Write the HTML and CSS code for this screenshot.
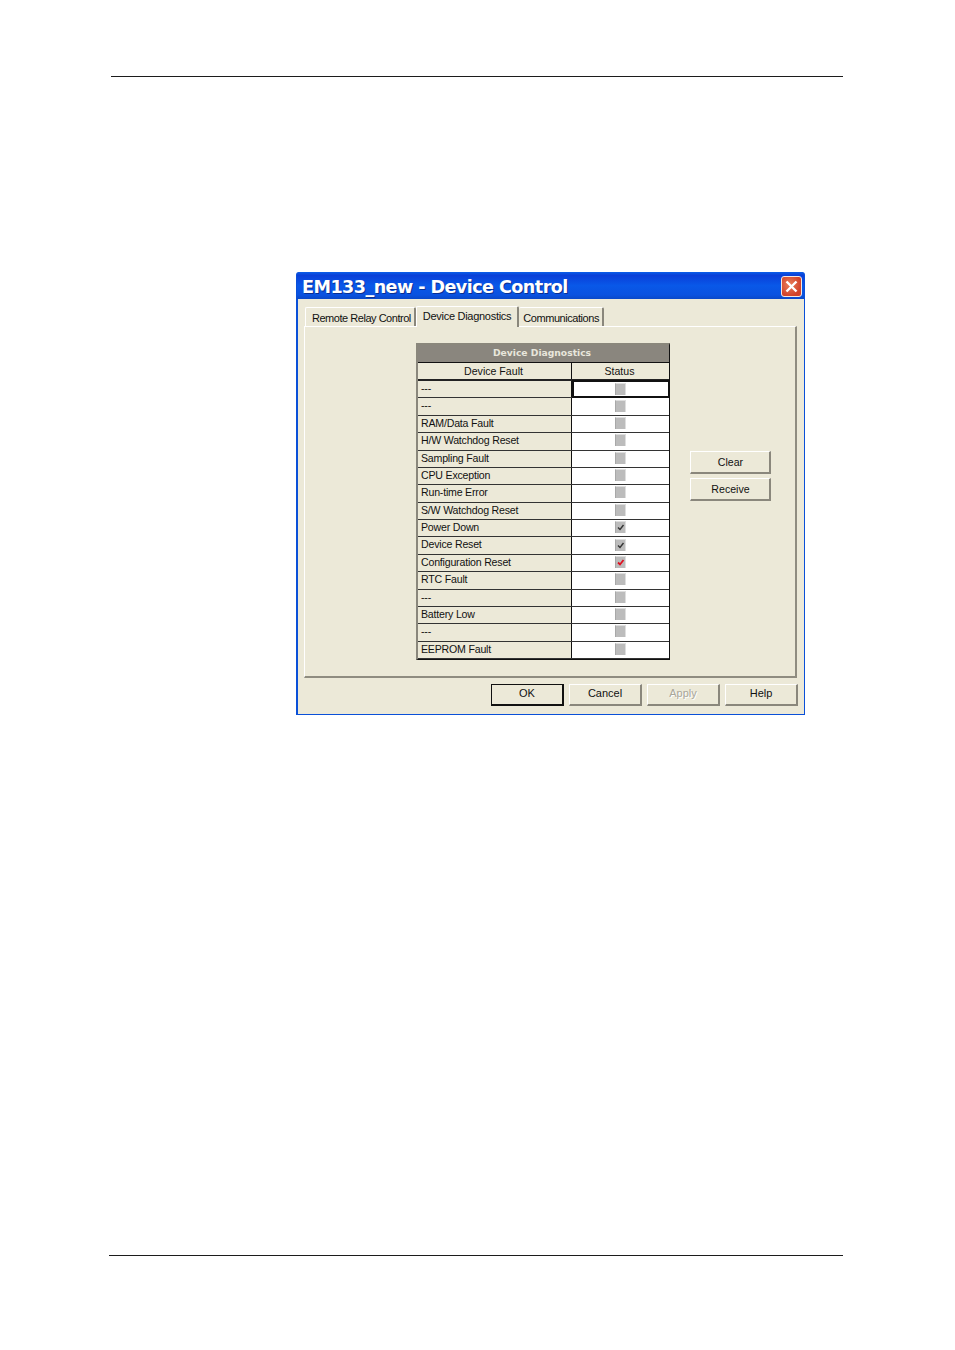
FILE: index.html
```html
<!DOCTYPE html>
<html lang="en">
<head>
<meta charset="utf-8">
<title>EM133_new - Device Control</title>
<link rel="stylesheet" href="styles.css">
</head>
<body>
<div class="page">
  <hr class="rule rule-top">
  <section class="dialog">
    <header class="titlebar">
      <span class="title">EM133_new - Device Control</span>
      <span class="close"><svg width="21" height="21" viewBox="0 0 21 21"><path d="M5.5 5.5l10 10M15.500 5.500l-10 10" stroke="#fff" stroke-width="2.4" fill="none"/></svg></span>
    </header>
    <div class="client">
      <nav class="tabs">
        <span class="tab">Remote Relay Control</span>
        <span class="tab tab-active">Device Diagnostics</span>
        <span class="tab tab-last">Communications</span>
      </nav>
      <div class="panel">
        <div class="grid">
          <div class="grid-title">Device Diagnostics</div>
          <div class="grid-head"><span class="col-name">Device Fault</span><span class="col-status">Status</span></div>
          <div class="row"><span class="name">---</span><span class="status focus"><i class="box"></i></span></div>
          <div class="row"><span class="name">---</span><span class="status"><i class="box"></i></span></div>
          <div class="row"><span class="name">RAM/Data Fault</span><span class="status"><i class="box"></i></span></div>
          <div class="row"><span class="name">H/W Watchdog Reset</span><span class="status"><i class="box"></i></span></div>
          <div class="row"><span class="name">Sampling Fault</span><span class="status"><i class="box"></i></span></div>
          <div class="row"><span class="name">CPU Exception</span><span class="status"><i class="box"></i></span></div>
          <div class="row"><span class="name">Run-time Error</span><span class="status"><i class="box"></i></span></div>
          <div class="row"><span class="name">S/W Watchdog Reset</span><span class="status"><i class="box"></i></span></div>
          <div class="row"><span class="name">Power Down</span><span class="status"><i class="box"><svg class="check" viewBox="0 0 11 11"><path d="M3 5.500l2 2 3.500-4.500" stroke="#333" stroke-width="1.400" fill="none"/></svg></i></span></div>
          <div class="row"><span class="name">Device Reset</span><span class="status"><i class="box"><svg class="check" viewBox="0 0 11 11"><path d="M3 5.500l2 2 3.500-4.500" stroke="#333" stroke-width="1.400" fill="none"/></svg></i></span></div>
          <div class="row"><span class="name">Configuration Reset</span><span class="status"><i class="box"><svg class="check" viewBox="0 0 11 11"><path d="M3 5.500l2 2 3.500-4.500" stroke="#e01020" stroke-width="1.800" fill="none"/></svg></i></span></div>
          <div class="row"><span class="name">RTC Fault</span><span class="status"><i class="box"></i></span></div>
          <div class="row"><span class="name">---</span><span class="status"><i class="box"></i></span></div>
          <div class="row"><span class="name">Battery Low</span><span class="status"><i class="box"></i></span></div>
          <div class="row"><span class="name">---</span><span class="status"><i class="box"></i></span></div>
          <div class="row"><span class="name">EEPROM Fault</span><span class="status"><i class="box"></i></span></div>
        </div>
        <div class="side-actions">
          <button class="btn btn-side" type="button">Clear</button>
          <button class="btn btn-side" type="button">Receive</button>
        </div>
      </div>
      <footer class="actions">
        <button class="btn btn-default" type="button">OK</button>
        <button class="btn" type="button">Cancel</button>
        <button class="btn btn-disabled" type="button">Apply</button>
        <button class="btn" type="button">Help</button>
      </footer>
    </div>
  </section>
  <hr class="rule rule-bottom">
</div>
</body>
</html>
```
FILE: styles.css
```css
* { box-sizing: border-box; }
html, body { margin: 0; background: #fff; }
body { font-family: "Liberation Sans", Arial, sans-serif; color: #111; }
.page { width: 955px; height: 1350px; padding-top: 76px; overflow: hidden; }
.rule { border: 0; height: 1px; background: #1c1c1c; margin: 0; }
.rule-top { width: 732px; margin-left: 111px; }
.rule-bottom { width: 734px; margin-left: 109px; margin-top: 540px; }

.dialog { width: 509px; height: 443px; margin: 195px 0 0 296px; background: #0a50d8; padding: 0 1px 2px 2px; display: flex; flex-direction: column; border-radius: 3px 3px 0 0; }
.titlebar { height: 27px; flex: none; display: flex; align-items: center; justify-content: space-between; padding: 1px 2px 0 4px; margin-left: -1px; background: linear-gradient(#0a5fe8 0%, #0a3fd8 12%, #0958e8 50%, #0a52e0 85%, #0a48c8 100%); border-radius: 3px 3px 0 0; }
.title { font: bold 17.6px "DejaVu Sans", sans-serif; letter-spacing: -0.57px; color: #fff; text-shadow: 1px 1px 0 #0a2f90; white-space: nowrap; position: relative; top: 1px; left: 1px; }
.close { width: 21px; height: 21px; background: radial-gradient(circle at 40% 40%, #e8805c, #d2432a 70%); border: 1px solid #f4e6e0; border-radius: 3px; display: flex; align-items: center; justify-content: center; }
.close svg { display: block; flex: none; }

.client { flex: 1; background: #ece9d8; padding: 6px 7px 8px 6px; display: flex; flex-direction: column; }
.tabs { display: flex; height: 21px; flex: none; align-items: flex-end; padding-left: 1px; position: relative; z-index: 1; }
.tab { height: 19px; font-size: 11px; letter-spacing: -0.47px; line-height: 20px; padding: 0 3px 0 6px; border-top: 1px solid #fff; border-left: 1px solid #fff; border-right: 2px solid #8a877c; white-space: nowrap; border-radius: 2px 2px 0 0; }
.tab-active { height: 21px; line-height: 18px; background: #ece9d8; padding: 0 6px 0 6px; margin-bottom: -1px; letter-spacing: -0.28px; }
.tab-last { padding: 0 3px 0 4px; border-left: 0; letter-spacing: -0.45px; }

.panel { height: 352px; flex: none; border: 1px solid #8f8c80; border-top-color: #fff; border-left-color: #fff; border-right-width: 2px; border-bottom-width: 2px; padding: 16px 0 0 111px; display: flex; align-items: flex-start; }
.grid { width: 254px; flex: none; border: 2px solid #111; border-top-color: #8a877c; border-left-color: #8a877c; border-right-width: 1px; border-bottom-width: 1px; font-size: 10.6px; background: #fff; }
.grid-title { height: 18px; background: #8a867e; color: #e8e6dc; font: bold 9.2px/16px "DejaVu Sans", sans-serif; text-align: center; border-bottom: 1px solid #111; padding-right: 3px; }
.grid-head { height: 18px; display: flex; background: #ece9d8; border-bottom: 2px solid #222; line-height: 17px; text-align: center; }
.col-name { width: 154px; border-right: 1px solid #111; padding-right: 2px; }
.col-status { flex: 1; padding-right: 2px; }
.row { height: 17.375px; display: flex; border-bottom: 1px solid #333; line-height: 15px; }
.name { width: 154px; background: #ece9d8; border-right: 1px solid #111; padding-left: 3px; white-space: nowrap; letter-spacing: -0.2px; }
.status { flex: 1; background: #fff; display: flex; align-items: center; justify-content: center; padding: 0 1px 2px 0; }
.focus { border: 2px solid #111; margin-top: -1px; margin-right: -1px; margin-bottom: -1px; padding: 0 2px 0 0; }
.box { width: 11px; height: 12px; display: block; background: #bcbcbc; border-top: 1px solid #dedede; border-right: 1px solid #dedede; border-left: 1px solid #a8a8a8; }
.check { width: 11px; height: 11px; display: block; margin-left: -1px; }

.side-actions { display: flex; flex-direction: column; gap: 4px; margin: 108px 0 0 20px; }
.btn { width: 73px; height: 22px; padding: 0 0 3px; background: #ece9d8; border: 1px solid #8a877c; border-top-color: #fff; border-left-color: #fff; border-right-width: 2px; border-bottom-width: 2px; font: 11px "Liberation Sans", Arial, sans-serif; color: #111; }
.btn-side { width: 81px; height: 23px; font-size: 10.6px; padding: 0 0 0 1px; }
.btn-default { border: 1px solid #111; border-right-width: 2px; border-bottom-width: 2px; }
.btn-disabled { color: #a8a69a; text-shadow: 1px 1px 0 #fff; }
.actions { display: flex; justify-content: flex-end; gap: 5px; margin-top: 6px; margin-right: -1px; }
```
